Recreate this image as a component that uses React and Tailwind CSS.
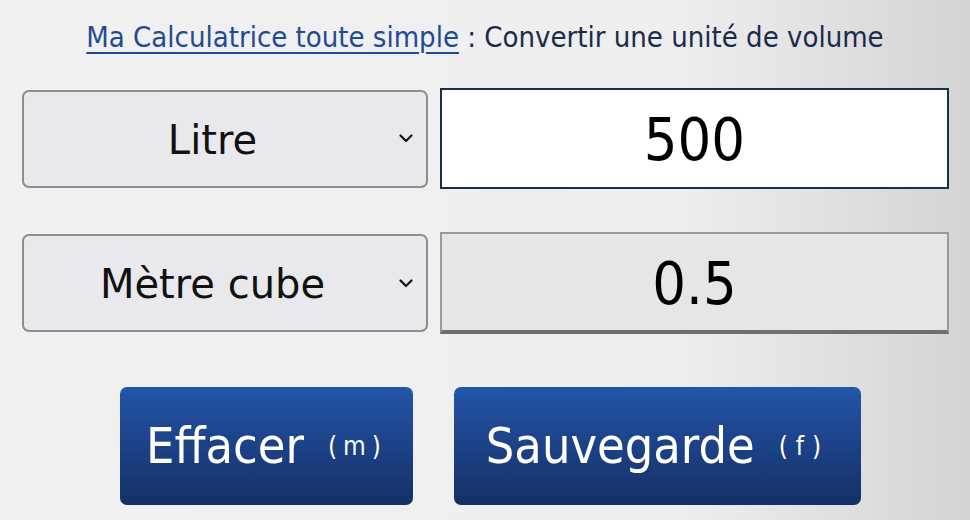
import React, { useState } from 'react';

const squareFont = "font-['DejaVu_Sans_Condensed','Liberation_Sans_Narrow',sans-serif]";

function Chevron() {
  return (
    <svg width="14" height="9" viewBox="0 0 14 9" className="shrink-0">
      <path d="M1.5 1.5 L7 7 L12.5 1.5" fill="none" stroke="#111" strokeWidth="2.2" strokeLinecap="round" strokeLinejoin="round" />
    </svg>
  );
}

function UnitSelect({ label }) {
  return (
    <div className="flex h-[98px] items-center rounded-[7px] border-2 border-[#8e8e8e] bg-[#e9e9ed] pl-[2px] pr-[13px]">
      <span className="flex-1 pt-[2px] text-center font-['DejaVu_Sans',Verdana,sans-serif] text-[40px] text-[#111]">{label}</span>
      <Chevron />
    </div>
  );
}

export default function App() {
  const [value] = useState('500');

  return (
    <div className="h-[520px] w-[970px] overflow-hidden bg-gradient-to-r from-[#f1f1f1] via-[#eeeeee] via-70% to-[#d4d4d4]">
      <h1 className={`pt-[17px] text-center text-[29px] leading-[40px] text-[#1b2b4d] ${squareFont}`}>
        <a href="#" className="text-[#1f4b94] underline decoration-2 underline-offset-[5px]">Ma Calculatrice toute simple</a>
        <span> : Convertir une unité de volume</span>
      </h1>

      <div className="mt-[31px] grid grid-cols-[406px_509px] items-center gap-x-3 gap-y-[43px] pl-[22px]">
        <UnitSelect label="Litre" />
        <div className={`flex h-[101px] items-center justify-center border-2 border-[#17304f] bg-white pt-1 text-[59px] text-black ${squareFont}`}>
          {value}
        </div>

        <UnitSelect label="Mètre cube" />
        <div className={`flex h-[102px] items-center justify-center border-2 border-b-[4px] border-[#9a9a9a] border-b-[#6f6f6f] bg-[#e6e6e6] pt-1 text-[59px] text-black ${squareFont}`}>
          0.5
        </div>
      </div>

      <div className="mt-[53px] flex gap-[41px] pl-[120px]">
        <button type="button" className={`flex h-[118px] w-[293px] items-center justify-center gap-6 rounded-[7px] bg-gradient-to-b from-[#2455a9] to-[#142f66] text-white ${squareFont}`}>
          <span className="text-[50px]">Effacer</span>
          <span className="text-[26px] tracking-[6px]">(m)</span>
        </button>
        <button type="button" className={`flex h-[118px] w-[407px] items-center justify-center gap-6 rounded-[7px] bg-gradient-to-b from-[#2455a9] to-[#142f66] text-white ${squareFont}`}>
          <span className="text-[50px]">Sauvegarde</span>
          <span className="text-[26px] tracking-[8px]">(f)</span>
        </button>
      </div>
    </div>
  );
}
